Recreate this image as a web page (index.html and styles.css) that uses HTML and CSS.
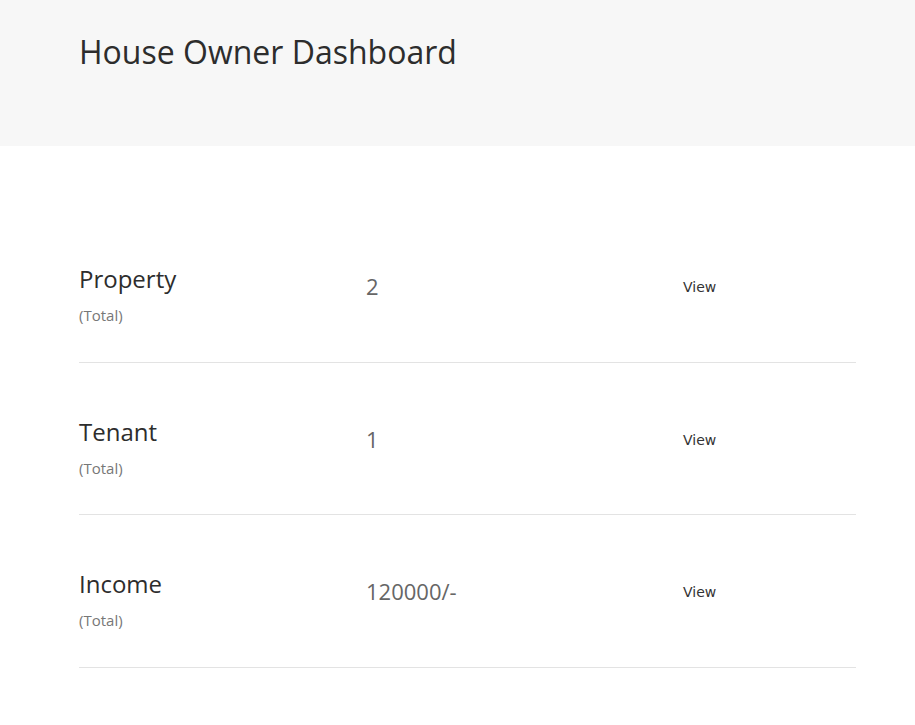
FILE: index.html
```html
<!DOCTYPE html>
<html>
<head>
<meta charset="utf-8">
<link rel="stylesheet" href="styles.css">
</head>
<body>
<header class="page-header">
  <h1 class="page-title">House Owner Dashboard</h1>
</header>
<main class="content">
  <div class="stat-row">
    <div class="stat-label">
      <div class="stat-name">Property</div>
      <div class="stat-sub">(Total)</div>
    </div>
    <div class="stat-value">2</div>
    <div class="stat-action"><a href="#" class="view-link">View</a></div>
  </div>
  <div class="stat-row">
    <div class="stat-label">
      <div class="stat-name">Tenant</div>
      <div class="stat-sub">(Total)</div>
    </div>
    <div class="stat-value">1</div>
    <div class="stat-action"><a href="#" class="view-link">View</a></div>
  </div>
  <div class="stat-row">
    <div class="stat-label">
      <div class="stat-name">Income</div>
      <div class="stat-sub">(Total)</div>
    </div>
    <div class="stat-value">120000/-</div>
    <div class="stat-action"><a href="#" class="view-link">View</a></div>
  </div>
</main>
</body>
</html>
```
FILE: styles.css
```css
html, body {
  margin: 0;
  padding: 0;
  background: #ffffff;
  font-family: "Open Sans", "DejaVu Sans", sans-serif;
  color: #333333;
}

.page-header {
  background: #f7f7f7;
  height: 146px;
  padding: 0 79px;
  box-sizing: border-box;
}

.page-title {
  margin: 0;
  padding-top: 29px;
  font-size: 32px;
  font-weight: 400;
  line-height: 46px;
  color: #2d2d2d;
}

.content {
  padding: 64px 59px 0 79px;
}

.stat-row {
  display: grid;
  grid-template-columns: 287px 317px 1fr;
  border-bottom: 1px solid #e3e3e3;
  padding-top: 53px;
  height: 152.6px;
  box-sizing: border-box;
}

.stat-name {
  font-size: 24px;
  line-height: 32px;
  color: #2d2d2d;
}

.stat-sub {
  margin-top: 10px;
  font-size: 15px;
  line-height: 20px;
  color: #777777;
}

.stat-value {
  padding-top: 9px;
  font-size: 22px;
  line-height: 28px;
  color: #666666;
}

.stat-action {
  padding-top: 12px;
}

.view-link {
  font-family: "DejaVu Sans", sans-serif;
  font-size: 14px;
  line-height: 20px;
  color: #333333;
  text-decoration: none;
}
```
